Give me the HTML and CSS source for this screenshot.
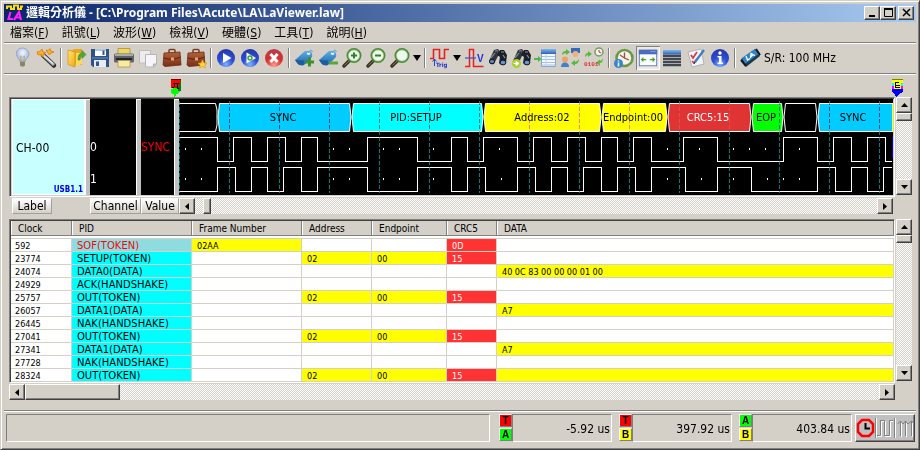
FILE: index.html
```html
<!DOCTYPE html>
<html lang="zh-Hant">

<head>
    <meta charset="UTF-8">
    <meta name="viewport" content="width=device-width, initial-scale=1.0">
    <title>邏輯分析儀</title>
    <link rel="stylesheet" href="styles.css">
</head>

<body>
    <svg class="defs" aria-hidden="true">
        <defs>
            <radialGradient id="ball" cx="50%" cy="85%" r="85%">
                <stop offset="0" stop-color="#7fb4ff"/><stop offset=".45" stop-color="#2f4fd8"/><stop offset="1" stop-color="#2436a8"/>
            </radialGradient>
            <radialGradient id="ballRed" cx="50%" cy="90%" r="90%">
                <stop offset="0" stop-color="#ff9a8a"/><stop offset=".5" stop-color="#d92f2f"/><stop offset="1" stop-color="#b83a4a"/>
            </radialGradient>
            <radialGradient id="glass" cx="50%" cy="35%" r="65%">
                <stop offset="0" stop-color="#f4f8ff"/><stop offset="1" stop-color="#8fabda"/>
            </radialGradient>
            <linearGradient id="leather" x1="0" y1="0" x2="0" y2="1">
                <stop offset="0" stop-color="#b4613a"/><stop offset="1" stop-color="#7a2f14"/>
            </linearGradient>
            <linearGradient id="tag" x1="0" y1="0" x2="0" y2="1">
                <stop offset="0" stop-color="#5aaee6"/><stop offset="1" stop-color="#1b62a8"/>
            </linearGradient>
            <linearGradient id="bar" x1="0" y1="0" x2="0" y2="1">
                <stop offset="0" stop-color="#7fb8ee"/><stop offset="1" stop-color="#2c62b4"/>
            </linearGradient>
            <linearGradient id="gold" x1="0" y1="0" x2="1" y2="1">
                <stop offset="0" stop-color="#ffe873"/><stop offset="1" stop-color="#f0a818"/>
            </linearGradient>
            <g id="case">
                <path d="M9 7V4.500Q9 3.500 10 3.500H14Q15 3.500 15 4.500V7" fill="none" stroke="#7c4024" stroke-width="1.500"/>
                <path d="M4 7L20 6L21 19L5 20.500L3 19Z" fill="url(#leather)" stroke="#6a2c14" stroke-width=".8"/>
                <path d="M4 12Q12 15 20.500 11" fill="none" stroke="#5a200c"/>
                <rect x="11" y="11.500" width="3" height="3" fill="#d8a878"/>
            </g>
            <g id="lens">
                <path d="M10 14L4 20" stroke="#3c3020" stroke-width="3.500" stroke-linecap="round"/>
                <path d="M9.500 14.500L4.500 19.500" stroke="#8a7a50" stroke-width="1"/>
                <circle cx="14" cy="9.500" r="6.500" fill="#eef8ee" stroke="#4f8a3c" stroke-width="2"/>
                <circle cx="14" cy="9.500" r="5.500" fill="none" stroke="#a8d890" stroke-width=".8"/>
            </g>
            <g id="label">
                <path d="M3 14L13 5L18 5Q21 7 20 11L12 19Q8 20 6 18Z" fill="url(#tag)"/>
                <path d="M3 14L12 14.500L12 19Q8 20 6 18Z" fill="#1d5c9e"/>
                <circle cx="16.500" cy="7.500" r="1.600" fill="#e8f4ff"/>
                <path d="M16 7Q19 2 20.500 6" fill="none" stroke="#5a9ad0"/>
            </g>
            <g id="binocular">
                <path d="M8 4L12 3L14 6L8 18Q4 19 3 15Z" fill="#30343c"/>
                <path d="M14 4L18 4L21 9L20 17Q16 21 13 17L14 11L11 9Z" fill="#1c2028"/>
                <path d="M9 5L12 5M5 12L9 7M15 6L18 6M17 9L19 12" stroke="#8a929c" stroke-width="1.200"/>
                <ellipse cx="6" cy="15.500" rx="2.500" ry="2.300" fill="#5c84b8" stroke="#10141c"/>
                <ellipse cx="17" cy="16.500" rx="2.800" ry="2.400" fill="#6a94c8" stroke="#10141c"/>
            </g>
        </defs>
    </svg>

    <div class="window">
        <header class="titlebar">
            <svg class="app-icon" width="18" height="18" viewBox="0 0 18 18">
                <path d="M1 5V2.500H5V5H8V1.500H12V5H15V2.500H17" fill="none" stroke="#ffe000" stroke-width="2"/>
                <path d="M4.500 8L2.500 15H7" fill="none" stroke="#ff20ff" stroke-width="2.200"/>
                <path d="M8 16L13 8L15 16M10 13.500H15" fill="none" stroke="#ff20ff" stroke-width="2.200"/>
            </svg>
            <h1 class="title">邏輯分析儀 - [C:\Program Files\Acute\LA\LaViewer.law]</h1>
            <div class="caption-buttons">
                <button class="caption" aria-label="Minimize"><svg width="12" height="10"><path d="M2 8H8" stroke="#000" stroke-width="2"/></svg></button>
                <button class="caption" aria-label="Maximize"><svg width="12" height="10"><path d="M1.500 1V8.500H9.500V1M1 1H10" stroke="#000" fill="none"/><path d="M1 1H10" stroke="#000" stroke-width="2"/></svg></button>
                <button class="caption close" aria-label="Close"><svg width="12" height="10"><path d="M2 1L9 8M9 1L2 8" stroke="#000" stroke-width="1.500"/></svg></button>
            </div>
        </header>

        <nav class="menubar">
            <button>檔案(<u>F</u>)</button>
            <button>訊號(<u>L</u>)</button>
            <button>波形(<u>W</u>)</button>
            <button>檢視(<u>V</u>)</button>
            <button>硬體(<u>S</u>)</button>
            <button>工具(<u>T</u>)</button>
            <button>說明(<u>H</u>)</button>
        </nav>

        <div class="toolbar">
            <button class="tool" aria-label="Tip"><svg viewBox="0 0 24 24">
                <path d="M12.500 2C8.500 2 6 5 6.500 8.500C7 12 10 13 10 16H15C15 13 18.500 12 19 8.500C19 5 16.500 2 12.500 2Z" fill="url(#glass)" stroke="#8c9cbc" stroke-width=".8"/>
                <path d="M11 15L10.500 10L12.500 11.500L14.500 10L14 15" fill="none" stroke="#c8a860" stroke-width=".8"/>
                <path d="M10 15.500H15V19L13.500 21H11.500L10 19Z" fill="#a8a878"/><path d="M10 17H15M10 19H15" stroke="#686848"/>
            </svg></button>
            <button class="tool" aria-label="Wizard"><svg viewBox="0 0 24 24">
                <path d="M9 9L20 19.500" stroke="#303030" stroke-width="4.500" stroke-linecap="round"/>
                <path d="M8 8L20 19" stroke="#b8b8b8" stroke-width="3"/><path d="M8 8L19 17.500" stroke="#fff" stroke-width="1"/>
                <path d="M3 6L6 5.500L8 3L9 6L12 6.500L9.500 8L9 11L7 8.500L4 9Z M12 4L14 4.500L16 2.500L16.500 5L20 6L17 7L15.500 9L14 7Z" fill="#ffb020" stroke="#e07808" stroke-width=".8"/>
            </svg></button>
            <span class="sep"></span>
            <button class="tool" aria-label="Open"><svg viewBox="0 0 24 24">
                <path d="M4 4H9L10 3H18V19H4Z" fill="#e8a820"/><path d="M4 4L11 6V21L4 18.500Z" fill="url(#gold)" stroke="#d89818" stroke-width=".8"/>
                <path d="M12 7H18V18L12 20Z" fill="#ffd858"/>
                <path d="M14 14Q14 7 18 7V4.500L22 8.500L18 12.500V10Q16 10 16 14Z" fill="#50a838" stroke="#388028" stroke-width=".6"/>
            </svg></button>
            <button class="tool" aria-label="Save"><svg viewBox="0 0 24 24">
                <path d="M3 3H21V21H5L3 19Z" fill="#2f5288"/><path d="M7 3H18V10H7Z" fill="#fff"/><path d="M7 3H18V5H7Z" fill="#a8c8e8"/><path d="M14.500 4.500H16.500V9H14.500Z" fill="#36578c"/>
                <path d="M6 14H18V21H6Z" fill="#e4ecf4"/><path d="M8 15.500H11V20H8Z" fill="#36578c"/><path d="M4 12H20" stroke="#6a90c0"/>
            </svg></button>
            <button class="tool" aria-label="Print"><svg viewBox="0 0 24 24">
                <path d="M6 2.500H18V10H6Z" fill="#f0d860" stroke="#a89040" stroke-width=".8"/>
                <rect x="2" y="7.500" width="20" height="9" rx="1.500" fill="#606468"/><path d="M3 9H21" stroke="#c0c4c8" stroke-width="1.500"/><path d="M4 13H20" stroke="#202428" stroke-width="2"/>
                <path d="M6 14.500H18V21H6Z" fill="#f8eca0" stroke="#a89850" stroke-width=".8"/>
            </svg></button>
            <button class="tool" aria-label="Copy" disabled><svg viewBox="0 0 24 24">
                <path d="M3.500 4.500H14.500V17H3.500Z" fill="#ececec" stroke="#bcbcbc"/><path d="M9.500 8.500H20.500V18L17.500 21H9.500Z" fill="#f6f6f8" stroke="#b4b4bc"/><path d="M20.500 18H17.500V21" fill="#c8c8d0" stroke="#a8a8b0"/>
            </svg></button>
            <button class="tool" aria-label="Workspace"><svg viewBox="0 0 24 24"><use href="#case"/></svg></button>
            <button class="tool" aria-label="New workspace"><svg viewBox="0 0 24 24"><use href="#case"/>
                <path d="M18.500 14L20 17L23 17.300L20.800 19.300L21.500 22L18.500 20.500L15.500 22L16.200 19.300L14 17.300L17 17Z" fill="#ffd840" stroke="#e89810" stroke-width=".7"/>
            </svg></button>
            <span class="sep"></span>
            <button class="tool" aria-label="Run"><svg viewBox="0 0 24 24">
                <circle cx="12" cy="12" r="9" fill="url(#ball)"/><path d="M9 7L17.500 12L9 17Z" fill="#fff"/>
            </svg></button>
            <button class="tool" aria-label="Repeat run"><svg viewBox="0 0 24 24">
                <circle cx="12" cy="12" r="9" fill="url(#ball)"/><path d="M8.500 6.500L18 12L8.500 17.500Z" fill="#fff"/><circle cx="12" cy="12" r="2" fill="none" stroke="#30a830" stroke-width="1.500"/>
            </svg></button>
            <button class="tool" aria-label="Stop"><svg viewBox="0 0 24 24">
                <circle cx="12" cy="12" r="9" fill="url(#ballRed)"/><path d="M8.500 8L15.500 16M15.500 8L8.500 16" stroke="#fff" stroke-width="3"/>
            </svg></button>
            <span class="sep"></span>
            <button class="tool" aria-label="Add label"><svg viewBox="0 0 24 24"><use href="#label"/>
                <path d="M17.500 11.500V20.500M13 16H22" stroke="#3c9030" stroke-width="3"/>
            </svg></button>
            <button class="tool" aria-label="Remove label"><svg viewBox="0 0 24 24"><use href="#label"/>
                <path d="M13 17H22" stroke="#58a838" stroke-width="3"/>
            </svg></button>
            <button class="tool" aria-label="Zoom in"><svg viewBox="0 0 24 24"><use href="#lens"/>
                <path d="M14 6.500V12.500M11 9.500H17" stroke="#308030" stroke-width="2"/>
            </svg></button>
            <button class="tool" aria-label="Zoom out"><svg viewBox="0 0 24 24"><use href="#lens"/>
                <path d="M11 9.500H17" stroke="#308030" stroke-width="2"/>
            </svg></button>
            <button class="tool" aria-label="Zoom"><svg viewBox="0 0 24 24"><use href="#lens"/></svg></button>
            <button class="drop" aria-label="Zoom options"><svg viewBox="0 0 8 6"><path d="M0 0H8L4 6Z"/></svg></button>
            <span class="sep"></span>
            <button class="tool" aria-label="Trigger"><svg viewBox="0 0 24 24">
                <path d="M2 12.500H5.500V3.500H11.500V12.500H16.500V3.500H21" fill="none" stroke="#e82020" stroke-width="1.600"/>
                <path d="M6.500 20V13M4.500 15.500L6.500 13L8.500 15.500" fill="none" stroke="#2040d8"/>
                <text class="icon-trig" x="8" y="21">Trig</text>
            </svg></button>
            <button class="drop" aria-label="Trigger options"><svg viewBox="0 0 8 6"><path d="M0 0H8L4 6Z"/></svg></button>
            <button class="tool" aria-label="Voltage"><svg viewBox="0 0 24 24">
                <path d="M3 20.500H7.500V3.500H11.500V20.500H21.500" fill="none" stroke="#e82020" stroke-width="1.500"/>
                <path d="M3 12H14" stroke="#3050d8" stroke-width="1.200"/><text class="icon-v" x="15" y="16">V</text>
            </svg></button>
            <button class="tool" aria-label="Find"><svg viewBox="0 0 24 24"><use href="#binocular"/></svg></button>
            <button class="tool" aria-label="Find next"><svg viewBox="0 0 24 24"><use href="#binocular"/>
                <circle cx="6.500" cy="17.500" r="4.500" fill="#a8d030"/><path d="M3.500 17.500H6M6 15.500L9 17.500L6 19.500Z" fill="#fff" stroke="#fff"/>
            </svg></button>
            <button class="tool" aria-label="Go to list"><svg viewBox="0 0 24 24">
                <path d="M7.500 3.500H21.500V20.500H7.500Z" fill="#f4f8ff" stroke="#88a8d0"/><path d="M7 3H22V8H7Z" fill="url(#bar)"/>
                <path d="M8 10.500H21M8 13.500H21M8 16.500H21M8 19H21" stroke="#a0c0e8"/><path d="M12 8V20" stroke="#c0d4ec"/>
                <path d="M0 12H4V10L7.500 13L4 16V14H0Z" fill="#50b840"/>
            </svg></button>
            <button class="tool" aria-label="Swap users"><svg viewBox="0 0 24 24">
                <path d="M13 2H22V7H13Z" fill="#2f6cc0"/><circle cx="17.500" cy="8" r="3" fill="#f0b078"/>
                <circle cx="7" cy="13.500" r="3" fill="#f0a060"/><path d="M3 21Q3 16.500 7 16.500T11 21Z" fill="#4080d0"/>
                <path d="M4 9Q4 5 8 5V3L12 6L8 9V7Q6 7 4 9Z M21 13Q21 18 17 18V20L13 17L17 14V16Q19 16 21 13Z" fill="#58b838"/>
            </svg></button>
            <button class="tool" aria-label="Decode"><svg viewBox="0 0 24 24">
                <circle cx="17" cy="6" r="4" fill="#f4f4e8" stroke="#789868" stroke-width="1.500"/><path d="M17 4V6L19 7" stroke="#a04040" fill="none"/>
                <path d="M3 11Q3 7 6 7V5L10 8L6 11V9Q5 9 3 11Z M21 12Q21 17 18 17V20L14 16.500L18 13.500V15Q20 15 21 12Z" fill="#58b838"/>
                <text class="icon-bits" x="2" y="20">0101</text>
            </svg></button>
            <span class="sep"></span>
            <button class="tool" aria-label="Timing"><svg viewBox="0 0 24 24">
                <circle cx="12.500" cy="12" r="8" fill="#f4f4ec" stroke="#6a9a48" stroke-width="2.600"/><path d="M12.500 6.500V12L17 14M12.500 12L8 9" fill="none" stroke="#a84c40" stroke-width="1.300"/>
                <circle cx="6.500" cy="17.500" r="4.500" fill="#3884c8"/><path d="M6.500 14.500V15.500M6.500 16.500V20.500" stroke="#fff" stroke-width="1.600"/>
            </svg></button>
            <button class="tool checked" aria-label="Fit window" aria-pressed="true"><svg viewBox="0 0 24 24">
                <rect x="2.500" y="3.500" width="19" height="17" fill="#fafcff" stroke="#5a74b8"/><path d="M2 3H22V8H2Z" fill="#4c6cc0"/><path d="M15 5H20" stroke="#c8d8ff" stroke-dasharray="1"/>
                <path d="M4 13.500L7 11V13H10V14.500H7V16.500ZM20 13.500L17 11V13H14V14.500H17V16.500Z" fill="#48a028"/>
            </svg></button>
            <button class="tool" aria-label="Waveform list"><svg viewBox="0 0 24 24">
                <path d="M3 4H21V21H3Z" fill="#a8acb0"/><path d="M3 4H21V8.500H3Z" fill="url(#bar)"/><path d="M3 10H21M3 13H21M3 16H21M3 19H21" stroke="#20242c" stroke-width="1.500"/>
            </svg></button>
            <button class="tool" aria-label="Report"><svg viewBox="0 0 24 24">
                <path d="M4 6L17 3L20 18L8 21Z" fill="#f2f4fa" stroke="#a0a4b0" stroke-width=".8"/>
                <path d="M7 9L9 12L13 6M8 15L10 17L13 13" fill="none" stroke="#d83838" stroke-width="1.700"/><path d="M20 4L11 16" stroke="#3c7cc0" stroke-width="2.200"/><path d="M11 16L10 18" stroke="#303030"/>
            </svg></button>
            <button class="tool" aria-label="About"><svg viewBox="0 0 24 24">
                <circle cx="12" cy="12" r="9" fill="url(#ball)"/><circle cx="12" cy="7" r="1.700" fill="#fff"/><path d="M9.500 10H13.500V16.500H15V18H9.500V16.500H11V11.500H9.500Z" fill="#fff"/>
            </svg></button>
            <span class="sep"></span>
            <svg class="rate-icon" viewBox="0 0 24 24">
                <path d="M3 13L17 3L22 10L8 21Z" fill="#20384c"/><path d="M4 12L17 3L20.500 8L7 18Z" fill="#2f84c8"/><path d="M3 14L8 20M18 3L22 9" stroke="#101820" stroke-width="2"/>
                <path d="M8 10L9.500 14L12 12.500M12.500 12L13 7.500L17 9.500M13 10.500L15 9" fill="none" stroke="#fff" stroke-width="1.300"/>
            </svg>
            <span class="rate">S/R: 100 MHz</span>
        </div>

        <main class="content">
            <div class="ruler">
                <svg class="marker marker-a" width="11" height="18" viewBox="0 0 11 18" shape-rendering="crispEdges">
                    <path d="M0 0H10V9H0Z" fill="#f00"/><path d="M10 1V12L6 15H5Z" fill="#008000"/><path d="M0 12H2V9H7V12H9V13L6 15H1Z" fill="#0f0"/><path d="M0 10H2V14H6L4 18H3V14L0 13Z" fill="#0f0"/>
                    <path d="M2 4H8M3 4V8M6 4V9H8M1 8H3" stroke="#000" fill="none"/><path d="M0 .5H10" stroke="#800000"/>
                </svg>
                <svg class="marker marker-b" width="11" height="18" viewBox="0 0 11 18" shape-rendering="crispEdges">
                    <path d="M0 0H11V10H0Z" fill="#ff0"/><path d="M0 4H2V7H0ZM9 4H11V7H9Z" fill="#0ff"/><path d="M0 7H2V10H0ZM9 7H11V10H9Z" fill="#f0f"/><path d="M0 .5H11" stroke="#808000"/>
                    <path d="M3.500 3V9M3 3.500H7M4 6H8M4 8.500H8" stroke="#000"/><path d="M0 10H11V13L7 15L5 18H4L3 15L0 13Z" fill="#00f"/>
                </svg>
            </div>

            <section class="pane">
                <div class="wave-frame">
                    <div class="signal-label"><span>CH-00</span><small>USB1.1</small></div>
                    <div class="splitter"></div>
                    <div class="signal-channel"><span>0</span><span>1</span></div>
                    <div class="splitter"></div>
                    <div class="signal-value">SYNC</div>
                    <div class="splitter"></div>
                    <div class="plot">
                        <svg width="714" height="96" viewBox="179 99 714 96">
                            <g class="bus">
                                <path d="M179 103.500H215.500L217 110V125L215.500 131.500H179"/>
                                <path fill="#00ccff" d="M218 117L219.500 103.500H349.500L351 117L349.500 131.500H219.500Z"/>
                                <path fill="#00ffff" d="M352 117L353.500 103.500H481.500L483 117L481.500 131.500H353.500Z"/>
                                <path fill="#ffff00" d="M484 117L485.500 103.500H599.500L601 117L599.500 131.500H485.500Z"/>
                                <path fill="#ffff00" d="M602 117L603.500 103.500H665.500L667 117L665.500 131.500H603.500Z"/>
                                <path fill="#e03333" d="M668 117L669.500 103.500H749.500L751 117L749.500 131.500H669.500Z"/>
                                <path fill="#00ff00" d="M752 117L753.500 103.500H781.500L783 117L781.500 131.500H753.500Z"/>
                                <path d="M784 117L785.500 103.500H815.500L817 117L815.500 131.500H785.500Z"/>
                                <path fill="#00ccff" d="M895 103.500H819.500L818 117L819.500 131.500H895"/>
                            </g>
                            <path d="M892 104H893V131H892Z" fill="#ffff00"/>
                            <path d="M892 137H893V158H892Z" fill="#0000ff"/>
                            <g class="trace">
                                <path d="M179 137.500H217.500V161.500H233.500V137.500H251.500V161.500H267.500V137.500H285.500V161.500H301.500V137.500H317.500V161.500H367.500V137.500H417.500V161.500H451.500V137.500H467.500V161.500H483.500V137.500H517.500V161.500H533.500V137.500H551.500V161.500H567.500V137.500H585.500V161.500H601.500V137.500H617.500V161.500H633.500V137.500H651.500V161.500H683.500V137.500H717.500V161.500H783.500V137.500H817.500V161.500H833.500V137.500H851.500V161.500H867.500V137.500H885.500V161.500H892"/>
                                <path d="M179 191.500H217.500V167.500H235.500V191.500H251.500V167.500H267.500V191.500H283.500V167.500H301.500V191.500H317.500V167.500H367.500V191.500H417.500V167.500H451.500V191.500H467.500V167.500H485.500V191.500H517.500V167.500H535.500V191.500H551.500V167.500H567.500V191.500H583.500V167.500H601.500V191.500H617.500V167.500H635.500V191.500H651.500V167.500H685.500V191.500H717.500V167.500H751.500V191.500H817.500V167.500H835.500V191.500H851.500V167.500H867.500V191.500H883.500V167.500H892"/>
                                <!-- sample points -->
                                <path d="M185.500 148v2M201.500 148v2M333.500 148v2M349.500 148v2M383.500 148v2M399.500 148v2M433.500 148v2M499.500 148v2M667.500 148v2M699.500 148v2M733.500 148v2M749.500 148v2M765.500 148v2M799.500 148v2"/>
                                <path d="M185.500 178v2M201.500 178v2M333.500 178v2M349.500 178v2M383.500 178v2M399.500 178v2M433.500 178v2M501.500 178v2M667.500 178v2M701.500 178v2M733.500 178v2M767.500 178v2M783.500 178v2M799.500 178v2"/>
                            </g>
                            <g class="bus-text">
                                <text x="283" y="121">SYNC</text>
                                <text x="416" y="121">PID:SETUP</text>
                                <text x="542" y="121">Address:02</text>
                                <text x="633" y="121">Endpoint:00</text>
                                <text x="708" y="121" class="light">CRC5:15</text>
                                <text x="766" y="121">EOP</text>
                                <text x="853" y="121">SYNC</text>
                            </g>
                            <path class="grid" d="M179.500 101V193M229.500 101V193M279.500 101V193M329.500 101V193M379.500 101V193M429.500 101V193M479.500 101V193M529.500 101V193M579.500 101V193M629.500 101V193M679.500 101V193M729.500 101V193M779.500 101V193M829.500 101V193M879.500 101V193"/>
                        </svg>
                    </div>
                </div>
                <div class="scroll vertical">
                    <button aria-label="Scroll up"><svg viewBox="0 0 7 4"><path d="M0 4H7L3.500 0Z"/></svg></button>
                    <div class="thumb"></div>
                    <button class="end" aria-label="Scroll down"><svg viewBox="0 0 7 4"><path d="M0 0H7L3.500 4Z"/></svg></button>
                </div>
            </section>

            <div class="wave-footer">
                <button class="tab tab-label">Label</button>
                <button class="tab tab-channel">Channel</button>
                <button class="tab tab-value">Value</button>
                <div class="scroll horizontal">
                    <button aria-label="Scroll left"><svg viewBox="0 0 4 7"><path d="M4 0V7L0 3.500Z"/></svg></button>
                    <div class="thumb thumb-wave"></div>
                    <button class="end" aria-label="Scroll right"><svg viewBox="0 0 4 7"><path d="M0 0V7L4 3.500Z"/></svg></button>
                </div>
            </div>

            <section class="pane">
                <div class="table-frame">
                    <table class="packets">
                        <colgroup>
                            <col class="col-clock"><col class="col-pid"><col class="col-frame"><col class="col-address"><col class="col-endpoint"><col class="col-crc"><col>
                        </colgroup>
                        <thead>
                            <tr><th>Clock</th><th>PID</th><th>Frame Number</th><th>Address</th><th>Endpoint</th><th>CRC5</th><th>DATA</th></tr>
                        </thead>
                        <tbody>
                            <tr><td>592</td><td class="pid selected">SOF(TOKEN)</td><td class="yellow">02AA</td><td></td><td></td><td class="red">0D</td><td></td></tr>
                            <tr><td>23774</td><td class="pid">SETUP(TOKEN)</td><td></td><td class="yellow">02</td><td class="yellow">00</td><td class="red">15</td><td></td></tr>
                            <tr><td>24074</td><td class="pid">DATA0(DATA)</td><td></td><td></td><td></td><td></td><td class="yellow">40 0C 83 00 00 00 01 00</td></tr>
                            <tr><td>24929</td><td class="pid">ACK(HANDSHAKE)</td><td></td><td></td><td></td><td></td><td></td></tr>
                            <tr><td>25757</td><td class="pid">OUT(TOKEN)</td><td></td><td class="yellow">02</td><td class="yellow">00</td><td class="red">15</td><td></td></tr>
                            <tr><td>26057</td><td class="pid">DATA1(DATA)</td><td></td><td></td><td></td><td></td><td class="yellow">A7</td></tr>
                            <tr><td>26445</td><td class="pid">NAK(HANDSHAKE)</td><td></td><td></td><td></td><td></td><td></td></tr>
                            <tr><td>27041</td><td class="pid">OUT(TOKEN)</td><td></td><td class="yellow">02</td><td class="yellow">00</td><td class="red">15</td><td></td></tr>
                            <tr><td>27341</td><td class="pid">DATA1(DATA)</td><td></td><td></td><td></td><td></td><td class="yellow">A7</td></tr>
                            <tr><td>27728</td><td class="pid">NAK(HANDSHAKE)</td><td></td><td></td><td></td><td></td><td></td></tr>
                            <tr><td>28324</td><td class="pid">OUT(TOKEN)</td><td></td><td class="yellow">02</td><td class="yellow">00</td><td class="red">15</td><td class="yellow"></td></tr>
                        </tbody>
                    </table>
                </div>
                <div class="scroll vertical">
                    <button aria-label="Scroll up"><svg viewBox="0 0 7 4"><path d="M0 4H7L3.500 0Z"/></svg></button>
                    <div class="thumb"></div>
                    <button class="end" aria-label="Scroll down"><svg viewBox="0 0 7 4"><path d="M0 0H7L3.500 4Z"/></svg></button>
                </div>
            </section>
            <div class="table-footer">
                <div class="scroll horizontal">
                    <button aria-label="Scroll left"><svg viewBox="0 0 4 7"><path d="M4 0V7L0 3.500Z"/></svg></button>
                    <div class="thumb thumb-table"></div>
                    <button class="end" aria-label="Scroll right"><svg viewBox="0 0 4 7"><path d="M0 0V7L4 3.500Z"/></svg></button>
                </div>
            </div>
        </main>

        <footer class="status">
            <div class="cell message"></div>
            <div class="reading">
                <div class="cursors"><b class="cur t">T</b><b class="cur a">A</b></div>
                <div class="cell">-5.92 us</div>
            </div>
            <div class="reading">
                <div class="cursors"><b class="cur t">T</b><b class="cur b">B</b></div>
                <div class="cell">397.92 us</div>
            </div>
            <div class="reading">
                <div class="cursors"><b class="cur a">A</b><b class="cur b">B</b></div>
                <div class="cell">403.84 us</div>
            </div>
            <div class="modes">
                <svg width="58" height="24" viewBox="0 0 58 24">
                    <path d="M6 4H13L17 8V16L13 20H6L2 16V8Z" fill="none" stroke="#f00" stroke-width="2.500"/><path d="M9.500 7V12.500H14" fill="none" stroke="#000" stroke-width="2"/>
                    <path d="M19.500 2V22M38.500 2V22" stroke="#808080"/><path d="M20.500 2V22M39.500 2V22" stroke="#fff"/>
                    <g fill="none"><path d="M22 20.500H25.500V5.500H29.500V20.500H34.500V5.500H37" stroke="#fff"/><path d="M21 19.500H24.500V4.500H28.500V19.500H33.500V4.500H37" stroke="#808080"/>
                    <path d="M45.500 6V21M50.500 6V21M56.500 6V21" stroke="#fff"/><path d="M44.500 5V20M49.500 5V20M55.500 5V20M41.500 8L44.500 5L47 8L49.500 5L52 8L55.500 5L58 8" stroke="#808080"/></g>
                </svg>
            </div>
        </footer>
    </div>
</body>

</html>
```
FILE: styles.css
```css
* {
    box-sizing: border-box;
}

body,
html {
    margin: 0;
    padding: 0;
}

body {
    background: #d4d0c8;
    color: #000;
    font-family: "DejaVu Sans Condensed", "Noto Sans CJK TC", sans-serif;
    font-size: 12px;
    line-height: 16px;
}

button {
    margin: 0;
    padding: 0;
    border: 0;
    background: none;
    color: inherit;
    font: inherit;
}

svg {
    display: block;
}

.defs {
    position: absolute;
    width: 0;
    height: 0;
}

.window {
    min-height: 100vh;
    display: flex;
    flex-direction: column;
    padding: 3px;
    border: 1px solid;
    border-color: #d4d0c8 #404040 #404040 #d4d0c8;
    box-shadow: inset 1px 1px #fff, inset -1px -1px #808080;
}

/* title bar */
.titlebar {
    display: flex;
    align-items: center;
    height: 18px;
    padding: 0 2px;
    background: linear-gradient(to right, #0a246a, #a6caf0);
    color: #fff;
}

.title {
    flex: 1;
    margin: 0 0 0 2px;
    font-family: "Noto Sans", "Noto Sans CJK TC", sans-serif;
    font-size: 12px;
    font-weight: bold;
    white-space: nowrap;
}

.caption-buttons {
    display: flex;
}

.caption {
    width: 16px;
    height: 14px;
    padding: 1px 2px;
}

.caption.close {
    margin-left: 2px;
}

.caption,
.scroll button,
.thumb,
.modes {
    background: #d4d0c8;
    border: 1px solid;
    border-color: #fff #404040 #404040 #fff;
    box-shadow: inset -1px -1px #808080;
}

/* menu */
.menubar {
    display: flex;
    gap: 13px;
    height: 21px;
    padding: 1px 6px 0;
    border-bottom: 1px solid #808080;
}

.menubar button {
    white-space: nowrap;
}

/* toolbar */
.toolbar {
    display: flex;
    align-items: center;
    height: 32px;
    padding: 0 6px 2px;
    border-top: 1px solid #fff;
    border-bottom: 1px solid #fff;
    box-shadow: inset 0 -1px #808080;
}

.tool {
    flex: none;
    width: 24px;
    height: 24px;
}

.tool.checked {
    background: #ece9e4;
    box-shadow: inset 1px 1px #808080, inset -1px -1px #fff;
}

.tool.checked svg {
    padding: 1px;
}

.drop {
    flex: none;
    width: 10px;
    padding: 0 1px;
}

.sep {
    flex: none;
    width: 2px;
    height: 20px;
    margin: 0 2px;
    border-left: 1px solid #808080;
    border-right: 1px solid #fff;
}

.rate-icon {
    flex: none;
    width: 24px;
    height: 24px;
}

.rate {
    margin-left: 2px;
    white-space: nowrap;
}

.icon-trig {
    font: bold 6px "DejaVu Sans Condensed", sans-serif;
    fill: #2030d0;
}

.icon-v {
    font: bold 10px "Liberation Sans", sans-serif;
    fill: #2030e0;
}

.icon-bits {
    font: bold 6px "Liberation Mono", monospace;
    fill: #e03030;
}

/* main area */
.content {
    flex: 1;
    padding: 0 4px 0 5px;
}

.ruler {
    position: relative;
    height: 22px;
}

.marker {
    position: absolute;
    top: 4px;
}

.marker-a {
    left: 162px;
}

.marker-b {
    right: 9px;
}

.pane {
    display: flex;
}

.wave-frame {
    flex: 1;
    min-width: 0;
    display: flex;
    height: 100px;
    padding: 1px 1px 1px 2px;
    border: 1px solid;
    border-color: #808080 #fff #fff #808080;
    box-shadow: inset 1px 1px #404040;
    background: #d4d0c8;
}

.signal-label {
    display: flex;
    flex-direction: column;
    flex: none;
    width: 73px;
    padding: 40px 1px 0 3px;
    border: 1px solid #fff;
    background: #c8ffff;
}

.signal-label small {
    margin-top: auto;
    color: #0000e0;
    font-size: 8px;
    font-weight: bold;
    line-height: 8px;
    text-align: right;
}

.splitter {
    flex: none;
    width: 5px;
    background: #c0c0c0;
    border-left: 1px solid #fff;
    border-top: 1px solid #fff;
}

.signal-channel {
    display: flex;
    flex-direction: column;
    flex: none;
    width: 46px;
    padding-top: 32px;
    background: #000;
    color: #fff;
    line-height: 32px;
}

.signal-value {
    flex: none;
    width: 33px;
    background: #000;
    color: #f00;
    line-height: 96px;
}

.plot {
    flex: 1;
    min-width: 0;
    overflow: hidden;
    background: #000;
}

.bus path {
    stroke: #fff;
}

.bus path:not([fill]),
.trace path {
    fill: none;
}

.trace path {
    stroke: #fff;
    shape-rendering: crispEdges;
}

.bus-text {
    font-size: 11px;
    text-anchor: middle;
}

.bus-text .light {
    fill: #fff;
}

.grid {
    fill: none;
    stroke: #008080;
    stroke-dasharray: 4 2;
    mix-blend-mode: difference;
}

/* scroll bars */
.scroll {
    display: flex;
    background: repeating-conic-gradient(#fff 0 25%, #d4d0c8 0 50%) 0 0 / 2px 2px;
}

.scroll button {
    display: flex;
    flex: none;
    align-items: center;
    justify-content: center;
    width: 16px;
    height: 16px;
}

.scroll .end {
    margin-left: auto;
}

.scroll.vertical {
    flex: none;
    flex-direction: column;
    width: 16px;
    margin: 0 0 2px 1px;
}

.scroll.vertical .end {
    margin: auto 0 0;
}

.scroll.vertical svg {
    width: 7px;
}

.scroll.horizontal {
    flex: 1;
    height: 16px;
}

.scroll.horizontal svg {
    width: 4px;
}

.vertical .thumb {
    height: 8px;
}

.thumb-wave {
    width: 8px;
    margin-left: 8px;
}

.thumb-table {
    width: 95px;
}

.wave-footer {
    display: flex;
    padding: 1px 19px 5px 3px;
}

.tab {
    flex: none;
    height: 16px;
    background: linear-gradient(#fff, #d4d0c8);
    border: 1px solid;
    border-color: #fff #a0a0a0 #a0a0a0 #fff;
    line-height: 14px;
}

.tab-label {
    width: 40px;
    margin-right: 38px;
}

.tab-channel {
    width: 51px;
}

.tab-value {
    width: 38px;
}

/* packet list */
.table-frame {
    flex: 1;
    min-width: 0;
    padding: 1px 0 0 1px;
    border: 1px solid;
    border-color: #808080 #fff #fff #808080;
    box-shadow: inset 1px 1px #404040;
}

.packets {
    width: 100%;
    table-layout: fixed;
    border-collapse: separate;
    border-spacing: 0;
    background: #fff;
    white-space: nowrap;
}

.col-clock {
    width: 61px;
}

.col-pid {
    width: 120px;
}

.col-frame {
    width: 110px;
}

.col-address {
    width: 70px;
}

.col-endpoint {
    width: 75px;
}

.col-crc {
    width: 50px;
}

.packets th {
    height: 18px;
    padding: 0 0 2px 7px;
    background: #d4d0c8;
    border-bottom: 1px solid #d4d0c8;
    box-shadow: inset 0 -2px #fff, inset 0 -3px #808080, inset 1px 0 #fff, inset -1px 0 #808080;
    font-size: 10px;
    font-weight: normal;
    line-height: 15px;
    text-align: left;
}

.packets td {
    height: 13px;
    padding: 2px 0 0 5px;
    border-right: 1px solid #d4d0c8;
    border-bottom: 1px solid #d4d0c8;
    font-size: 9px;
    line-height: 10px;
}

.packets td:first-child {
    padding-left: 4px;
}

.packets .pid {
    background: #0ff;
    font-family: "DejaVu Sans", sans-serif;
    font-size: 10px;
}

.packets .selected {
    background: #8fdce0;
    color: #f00;
}

.packets .yellow {
    background: #ff0;
}

.packets .red {
    background: #f33;
    color: #fff;
}

.table-footer {
    display: flex;
    padding: 1px 17px 8px 0;
}

/* status bar */
.status {
    display: flex;
    padding: 3px 1px 4px 2px;
    border-top: 1px solid #808080;
    box-shadow: inset 0 1px #fff;
}

.cell {
    width: 100px;
    height: 28px;
    padding-right: 1px;
    border: 1px solid;
    border-color: #808080 #fff #fff #808080;
    line-height: 28px;
    text-align: right;
}

.message {
    flex: 1;
    margin-right: 2px;
}

.reading {
    display: flex;
    margin-left: 7px;
}

.cursors {
    display: flex;
    flex-direction: column;
    gap: 1px;
}

.cur {
    width: 13px;
    height: 13px;
    border: 1px solid;
    border-color: #fff #808080 #808080 #fff;
    font-family: "Liberation Sans", sans-serif;
    font-size: 10px;
    line-height: 11px;
    text-align: center;
}

.cur.t {
    background: #f00;
}

.cur.a {
    background: #0f0;
}

.cur.b {
    background: #ff0;
}

.modes {
    margin-left: 3px;
    padding: 1px 0;
    height: 28px;
    background: #c0c0c0;
}
```
